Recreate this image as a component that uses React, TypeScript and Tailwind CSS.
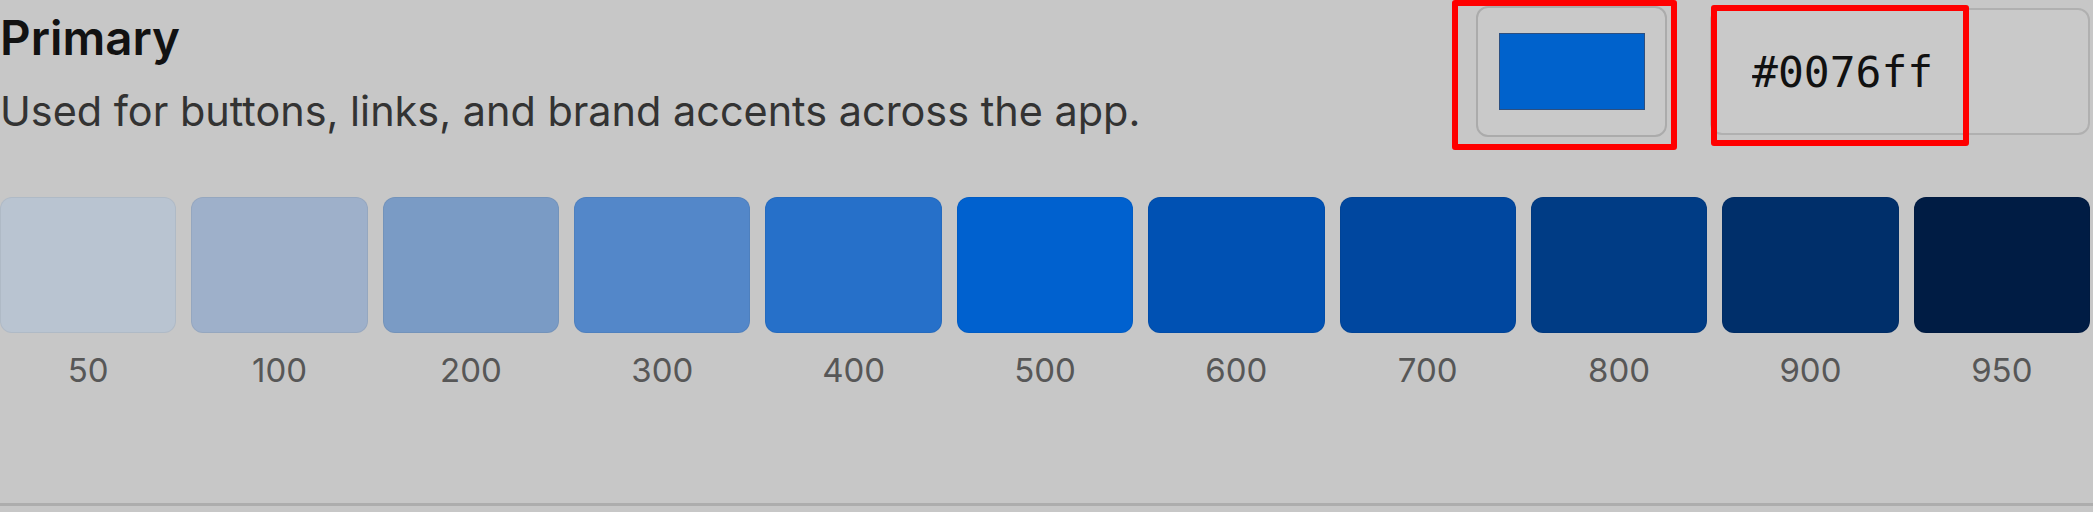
import { useState } from 'react';

const shades = [
  { step: '50', color: '#b9c4d1' },
  { step: '100', color: '#9eb0ca' },
  { step: '200', color: '#7a9bc5' },
  { step: '300', color: '#5387c9' },
  { step: '400', color: '#2670c9' },
  { step: '500', color: '#0061cf' },
  { step: '600', color: '#0051b3' },
  { step: '700', color: '#00479f' },
  { step: '800', color: '#003c85' },
  { step: '900', color: '#002f6a' },
  { step: '950', color: '#001c44' },
];

function ColorField({ value }: { value: string }) {
  return (
    <div className="flex h-[131px] w-[191px] items-center justify-center rounded-[12px] border-2 border-[#ababab] bg-[#c9c9c9]">
      <div className="h-[77px] w-[146px] border border-[#2c4f80] bg-[#0062cc]" title={value} />
    </div>
  );
}

function HexField({ value, onChange }: { value: string; onChange: (v: string) => void }) {
  return (
    <input
      type="text"
      value={value}
      onChange={(e) => onChange(e.target.value)}
      spellCheck={false}
      className="h-[127px] w-[380px] rounded-[12px] border-2 border-[#b0b0b0] bg-[#c9c9c9] pl-[40px] font-['DejaVu_Sans_Mono',monospace] text-[43px] text-[#111] outline-none"
    />
  );
}

export default function App() {
  const [hex, setHex] = useState('#0076ff');

  return (
    <div className="relative h-[512px] w-[2093px] overflow-hidden bg-[#c7c7c7] font-['Inter',sans-serif]">
      <div className="flex h-[506px] flex-col border-b-[3px] border-[#adadad] pr-[3px]">
        {/* header: name + description, picker on the right */}
        <div className="flex items-start justify-between">
          <div className="pt-[10px]">
            <h2 className="text-[47.5px] font-semibold leading-[56px] text-[#121212]">Primary</h2>
            <p className="mt-[20px] text-[41.4px] leading-[50px] text-[#333]">
              Used for buttons, links, and brand accents across the app.
            </p>
          </div>
          <div className="flex items-center gap-[43px] pt-[6px]">
            <ColorField value={hex} />
            <HexField value={hex} onChange={setHex} />
          </div>
        </div>

        {/* generated scale */}
        <div className="mt-[60px] grid grid-cols-11 gap-[15px]">
          {shades.map((s) => (
            <div key={s.step} className="flex flex-col items-center">
              <div
                className="h-[136px] w-full rounded-[12px] border border-black/5"
                style={{ backgroundColor: s.color }}
              />
              <span className="mt-[17px] text-[33px] leading-[40px] text-[#575757]">{s.step}</span>
            </div>
          ))}
        </div>
      </div>

      {/* highlight boxes */}
      <div className="absolute left-[1452px] top-0 h-[150px] w-[225px] rounded-[3px] border-[6px] border-[#f00]" />
      <div className="absolute left-[1711px] top-[5px] h-[141px] w-[258px] rounded-[3px] border-[6px] border-[#f00]" />
    </div>
  );
}
